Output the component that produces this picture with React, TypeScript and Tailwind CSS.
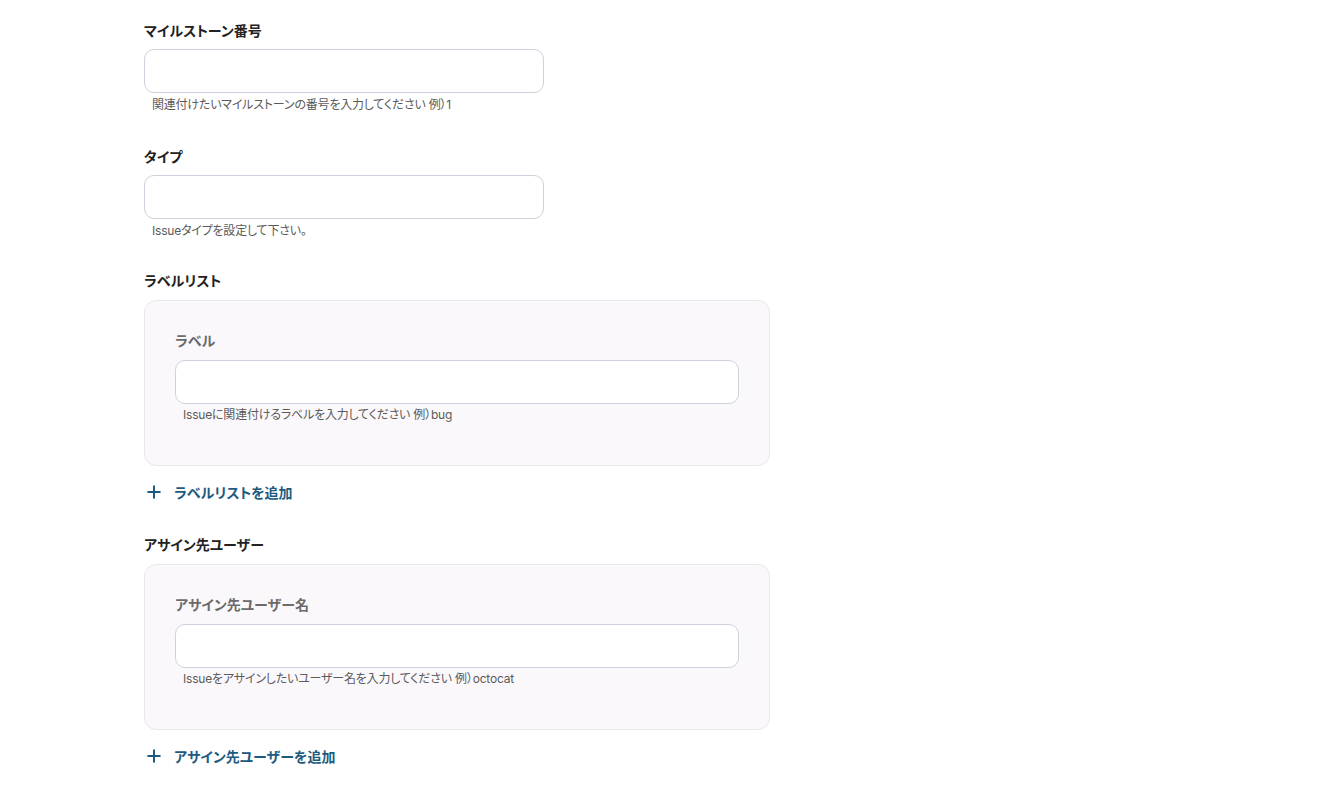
import React from 'react';
import { Plus } from 'lucide-react';

const font = { fontFamily: '"Inter", "Noto Sans CJK JP", sans-serif' };

const TextField: React.FC<{ label: string; hint: string; width: string; inner?: boolean }> = ({ label, hint, width, inner }) => (
  <div>
    <div className={`text-[14px] leading-[20px] font-bold ${inner ? 'text-[#6b6b6b]' : 'text-[#222]'}`}>{label}</div>
    <input
      className={`${width} ${inner ? 'mt-[9px]' : 'mt-[8px]'} h-[44px] rounded-[10px] border border-[#cfd2dc] bg-white px-3 block outline-none`}
    />
    <p className={`${inner ? 'mt-[3px]' : 'mt-[4px]'} pl-2 text-[12px] leading-[16px] tracking-[-0.2px] text-[#5a5a5a]`}>{hint}</p>
  </div>
);

const ListField: React.FC<{ title: string; label: string; hint: string; addText: string }> = ({ title, label, hint, addText }) => (
  <div>
    <div className="text-[14px] leading-[20px] font-bold text-[#222]">{title}</div>
    <div className="mt-[9px] w-[626px] h-[166px] rounded-[12px] border border-[#e9e7ed] bg-[#faf8fb] pt-[30px] px-[30px]">
      <TextField label={label} hint={hint} width="w-[564px]" inner />
    </div>
    <button className="mt-[16px] flex items-center h-[20px] text-[14px] font-bold text-[#1d5b7e]">
      <Plus size={20} strokeWidth={2.4} className="mr-[10px]" />
      {addText}
    </button>
  </div>
);

const App: React.FC = () => {
  return (
    <div className="min-h-screen bg-white [font-feature-settings:'palt']" style={font}>
      <div className="pl-[144px] pt-[21px] flex flex-col">
        <TextField label="マイルストーン番号" hint="関連付けたいマイルストーンの番号を入力してください 例）1" width="w-[400px]" />
        <div className="mt-[34px]">
          <TextField label="タイプ" hint="Issueタイプを設定して下さい。" width="w-[400px]" />
        </div>
        <div className="mt-[32px]">
          <ListField title="ラベルリスト" label="ラベル" hint="Issueに関連付けるラベルを入力してください 例）bug" addText="ラベルリストを追加" />
        </div>
        <div className="mt-[33px]">
          <ListField title="アサイン先ユーザー" label="アサイン先ユーザー名" hint="Issueをアサインしたいユーザー名を入力してください 例）octocat" addText="アサイン先ユーザーを追加" />
        </div>
      </div>
    </div>
  );
};

export default App;
